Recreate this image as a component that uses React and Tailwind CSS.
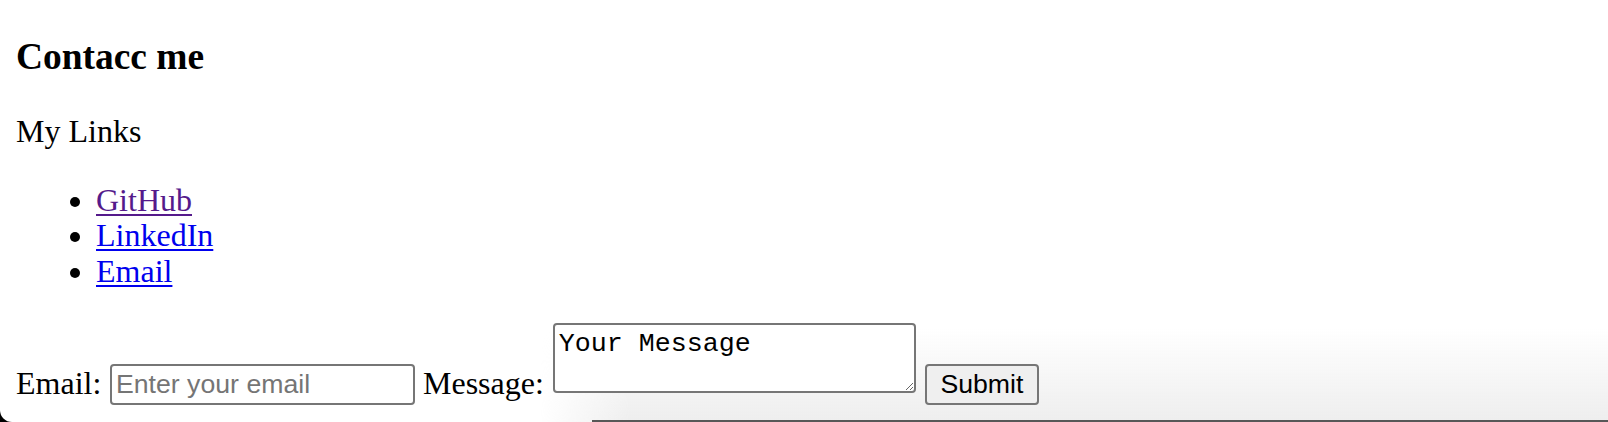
import React from 'react';

const links = [
    { label: 'GitHub', href: '#github', visited: true },
    { label: 'LinkedIn', href: '#linkedin' },
    { label: 'Email', href: '#email' },
];

const App = () => {
    return (
        <div className="relative h-[422px] w-full overflow-hidden bg-white px-[16px] pt-[35px] font-['Liberation_Serif',serif] text-black">
            {/* screenshot shadow along the bottom edge, kept under the page content */}
            <div className="pointer-events-none absolute bottom-0 left-[540px] right-0 h-[95px] bg-[linear-gradient(to_bottom,rgba(239,239,239,0),#eeeeee)] [mask-image:linear-gradient(to_right,transparent,black_90px)]" />
            <div className="pointer-events-none absolute bottom-0 left-[592px] right-0 h-[2px] bg-[#575757]" />
            <div className="pointer-events-none absolute bottom-0 left-0 size-[12px] bg-black">
                <div className="size-full rounded-bl-[12px] bg-white" />
            </div>

            <h3 className="relative text-[37.44px] font-bold leading-[43px]">Contacc me</h3>

            <p className="relative mt-[35px] text-[32px] leading-[36px]">My Links</p>

            <ul className="relative mt-[33.5px] list-disc pl-[80px] text-[32px] leading-[35.5px]">
                {links.map((link) => (
                    <li key={link.label}>
                        <a
                            href={link.href}
                            className={`underline decoration-[2px] underline-offset-[3px] ${link.visited ? 'text-[#551a8b]' : 'text-[#0000ee]'}`}
                        >
                            {link.label}
                        </a>
                    </li>
                ))}
            </ul>

            <form className="relative mt-[34px] flex items-start" onSubmit={(e) => e.preventDefault()}>
                <label htmlFor="email" className="mt-[41.5px] text-[32px] leading-[36px]">Email:</label>
                <input
                    id="email"
                    type="email"
                    placeholder="Enter your email"
                    className="ml-[8.7px] mt-[41px] h-[41px] w-[305px] rounded-[4px] border-2 border-[#767676] bg-white px-[4px] font-['Liberation_Sans',Arial,sans-serif] text-[26.67px] text-black outline-none placeholder:text-[#757575]"
                />
                <label htmlFor="message" className="ml-[8px] mt-[41.5px] text-[32px] leading-[36px]">Message:</label>
                <textarea
                    id="message"
                    defaultValue="Your Message"
                    className="ml-[9px] h-[70px] w-[363px] rounded-[4px] border-2 border-[#767676] bg-white px-[4px] py-[4px] font-['Liberation_Mono',monospace] text-[26.67px] leading-[30px] text-black outline-none"
                />
                <button
                    type="submit"
                    className="ml-[9px] mt-[41px] h-[41px] w-[114px] rounded-[4px] border-2 border-[#767676] bg-[#efefef] font-['Liberation_Sans',Arial,sans-serif] text-[26.67px] leading-none text-black"
                >
                    Submit
                </button>
            </form>
        </div>
    );
};

export default App;
